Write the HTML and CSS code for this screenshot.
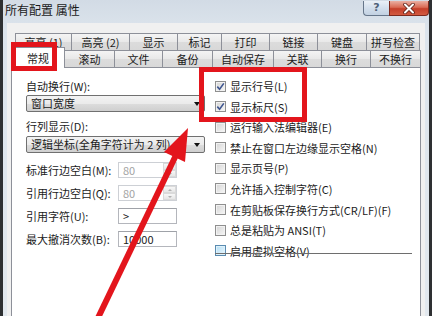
FILE: index.html
```html
<!DOCTYPE html>
<html lang="zh-CN">
<head>
<meta charset="utf-8">
<title>所有配置 属性</title>
<link rel="stylesheet" href="styles.css">
</head>
<body>
<div class="window">
  <div class="titlebar">
    <span class="title">所有配置 属性</span>
    <div class="capbtns">
      <div class="cbtn help">?</div>
      <div class="cbtn close">
        <svg width="14" height="11" viewBox="0 0 14 11"><path d="M3 1.5 L11 9.5 M11 1.5 L3 9.5" stroke="#5a2018" stroke-width="3.6" stroke-linecap="round"/><path d="M3 1.5 L11 9.5 M11 1.5 L3 9.5" stroke="#ffffff" stroke-width="2" stroke-linecap="round"/></svg>
      </div>
    </div>
  </div>
  <div class="client">
    <div class="tabrow back">
      <div class="tab w57">高亮 (1)</div>
      <div class="tab w58">高亮 (2)</div>
      <div class="tab w48">显示</div>
      <div class="tab w44">标记</div>
      <div class="tab w48">打印</div>
      <div class="tab w48">链接</div>
      <div class="tab w49">键盘</div>
      <div class="tab w53">拼写检查</div>
    </div>
    <div class="tabrow front">
      <div class="tab sel w54">常规</div>
      <div class="tab w50">滚动</div>
      <div class="tab w48">文件</div>
      <div class="tab w50">备份</div>
      <div class="tab w61">自动保存</div>
      <div class="tab w48">关联</div>
      <div class="tab w49">换行</div>
      <div class="tab w50">不换行</div>
    </div>
    <div class="panel">
      <div class="leftcol">
        <div class="lbl">自动换行(W):</div>
        <div class="combo"><span>窗口宽度</span><i class="arrow"></i></div>
        <div class="lbl lbl2">行列显示(D):</div>
        <div class="combo combo2"><span>逻辑坐标(全角字符计为 2 列)</span><i class="arrow"></i></div>
        <div class="frow first">
          <span class="flabel">标准行边空白(M):</span>
          <div class="input dis"><span class="val">80</span><div class="spin"><span class="up"></span><span class="down"></span></div></div>
        </div>
        <div class="frow">
          <span class="flabel">引用行边空白(Q):</span>
          <div class="input dis"><span class="val">80</span><div class="spin"><span class="up"></span><span class="down"></span></div></div>
        </div>
        <div class="frow">
          <span class="flabel">引用字符(U):</span>
          <div class="input"><span class="val">&gt;</span></div>
        </div>
        <div class="frow">
          <span class="flabel">最大撤消次数(B):</span>
          <div class="input"><span class="val">10000</span></div>
        </div>
      </div>
      <div class="rightcol">
        <div class="cb"><span class="box"><svg width="9" height="9" viewBox="0 0 9 9"><path d="M1.3 4.6 L3.6 7.2 L7.8 1.4" fill="none" stroke="#3f5690" stroke-width="1.6"/></svg></span>显示行号(L)</div>
        <div class="cb"><span class="box"><svg width="9" height="9" viewBox="0 0 9 9"><path d="M1.3 4.6 L3.6 7.2 L7.8 1.4" fill="none" stroke="#3f5690" stroke-width="1.6"/></svg></span>显示标尺(S)</div>
        <div class="cb"><span class="box"></span>运行输入法编辑器(E)</div>
        <div class="cb"><span class="box"></span>禁止在窗口左边缘显示空格(N)</div>
        <div class="cb"><span class="box"></span>显示页号(P)</div>
        <div class="cb"><span class="box"></span>允许插入控制字符(C)</div>
        <div class="cb"><span class="box"></span>在剪贴板保存换行方式(CR/LF)(F)</div>
        <div class="cb"><span class="box"></span>总是粘贴为 ANSI(T)</div>
        <div class="cb"><span class="box hover"></span>启用虚拟空格(V)</div>
        <div class="vline"></div>
      </div>
    </div>
  </div>
</div>
<svg class="annot" width="432" height="316" viewBox="0 0 432 316">
  <rect x="13.5" y="44.5" width="41" height="24" fill="none" stroke="#e3151c" stroke-width="5"/>
  <rect x="201.5" y="69.5" width="103" height="50" fill="none" stroke="#e3151c" stroke-width="5"/>
  <line x1="97" y1="320" x2="178" y2="151" stroke="#e3151c" stroke-width="6"/>
  <polygon points="188,128 164,152 185,162" fill="#e3151c"/>
</svg>
</body>
</html>
```
FILE: styles.css
```css
* { box-sizing: border-box; margin: 0; padding: 0; }
html, body { width: 432px; height: 316px; overflow: hidden; }
body {
  background: #2e3032;
  font-family: "Noto Sans CJK SC", "Noto Sans", sans-serif;
  font-size: 11px;
  color: #1b1b1b;
  position: relative;
}
.window {
  margin-left: 3px;
  width: 426px;
  height: 316px;
  background: linear-gradient(#d2dbe5, #dce4ec 30px, #e2e8ee);
  display: flex;
  flex-direction: column;
}
.titlebar {
  height: 23px;
  display: flex;
  justify-content: space-between;
  align-items: flex-start;
  flex-shrink: 0;
}
.title {
  font-size: 12px;
  line-height: 18px;
  padding: 1px 0 0 2px;
  color: #1a1a1a;
}
.capbtns { display: flex; margin-top: 1px; }
.cbtn {
  height: 15px;
  border: 1px solid #66768a;
  border-top: none;
  display: flex;
  align-items: center;
  justify-content: center;
}
.help {
  width: 26px;
  border-right: none;
  border-radius: 0 0 0 4px;
  background: linear-gradient(#eaf0f7, #d3dfec 50%, #c2d1e2);
  color: #4f6178;
  font-size: 11px;
  font-weight: bold;
  line-height: 14px;
  font-family: "DejaVu Sans", sans-serif;
}
.close {
  width: 40px;
  border-color: #7d2a1e;
  border-radius: 0 0 4px 0;
  background: linear-gradient(#eab0a3, #d96b55 45%, #c43f2a 55%, #d35a40);
}
.client {
  flex: 1;
  min-height: 0;
  margin: 0 4px;
  background: #f0f0f0;
  padding: 10px 4px 0;
  display: flex;
  flex-direction: column;
}
.tabrow { display: flex; height: 17px; flex-shrink: 0; align-items: flex-start; }
.tabrow.back { margin-left: 4px; }
.tab {
  height: 17px;
  border: 1px solid #8d9099;
  border-left: none;
  border-bottom: none;
  background: linear-gradient(#f4f4f4, #e8e8e8 50%, #dcdcdc 51%, #d8d8d8);
  text-align: center;
  line-height: 16px;
  white-space: nowrap;
}
.tab:first-child { border-left: 1px solid #8d9099; }
.tab.sel {
  background: #ffffff;
  height: 21px;
  margin-top: -3px;
  margin-bottom: -1px;
  padding-top: 2px;
  position: relative;
  z-index: 1;
  line-height: 17px;
}
.w44 { width: 44px; } .w48 { width: 48px; } .w49 { width: 49px; } .w50 { width: 50px; }
.w53 { width: 53px; } .w54 { width: 54px; } .w57 { width: 57px; } .w58 { width: 58px; } .w61 { width: 61px; }
.panel {
  flex: 1;
  min-height: 0;
  background: #ffffff;
  border: 1px solid #8d9099;
  border-bottom: none;
  display: flex;
  align-items: flex-start;
  padding: 10px 0 0 14px;
}
.leftcol { width: 179px; display: flex; flex-direction: column; }
.lbl { height: 16px; line-height: 16px; }
.lbl2 { margin-top: 6px; }
.combo {
  height: 17px;
  margin-top: 1px;
  border: 1px solid #707070;
  border-radius: 2px;
  background: linear-gradient(#f3f3f3, #ebebeb 50%, #dddddd 51%, #cfcfcf);
  display: flex;
  align-items: center;
  justify-content: space-between;
  padding: 0 4px;
  line-height: 15px;
  white-space: nowrap;
}
.combo2 { margin-top: 2px; }
.arrow {
  width: 0;
  height: 0;
  border-left: 3.5px solid transparent;
  border-right: 3.5px solid transparent;
  border-top: 4px solid #111;
}
.frow { display: flex; align-items: center; height: 16px; margin-top: 7px; }
.frow.first { margin-top: 9px; }
.flabel { width: 92px; white-space: nowrap; }
.input {
  width: 59px;
  height: 16px;
  border: 1px solid #b4b6bc;
  border-top-color: #9fa2a8;
  background: #fff;
  display: flex;
  align-items: stretch;
  padding-left: 4px;
  line-height: 14px;
}
.input.dis { border-color: #cdd0d5; color: #a3a3a3; }
.val { flex: 1; }
.spin { width: 13px; display: flex; flex-direction: column; }
.spin span {
  flex: 1;
  border: 1px solid #dadada;
  background: linear-gradient(#f7f7f7, #e6e6e6);
  display: flex;
  align-items: center;
  justify-content: center;
}
.spin .up::before {
  content: "";
  border-left: 2.5px solid transparent;
  border-right: 2.5px solid transparent;
  border-bottom: 2.5px solid #b0b0b0;
}
.spin .down::before {
  content: "";
  border-left: 2.5px solid transparent;
  border-right: 2.5px solid transparent;
  border-top: 2.5px solid #b0b0b0;
}
.rightcol { margin-left: 10px; margin-top: -2.3px; display: flex; flex-direction: column; }
.cb { height: 20.6px; display: flex; align-items: center; gap: 4px; white-space: nowrap; }
.box {
  width: 11px;
  height: 11px;
  border: 1px solid #8f8f8f;
  background: linear-gradient(135deg, #d4d4d4, #f7f7f7);
  box-shadow: inset 0 0 0 1px #f2f2f2;
  display: flex;
  align-items: center;
  justify-content: center;
  flex-shrink: 0;
}
.box.hover {
  border-color: #5a8bb0;
  background: linear-gradient(135deg, #b5def4, #eaf7fe);
  box-shadow: inset 0 0 0 1px #dff2fb;
}
.vline { width: 197px; height: 1px; background: #6e6e6e; margin-top: -8px; }
.annot { position: absolute; top: 0; left: 0; z-index: 5; pointer-events: none; }
```
